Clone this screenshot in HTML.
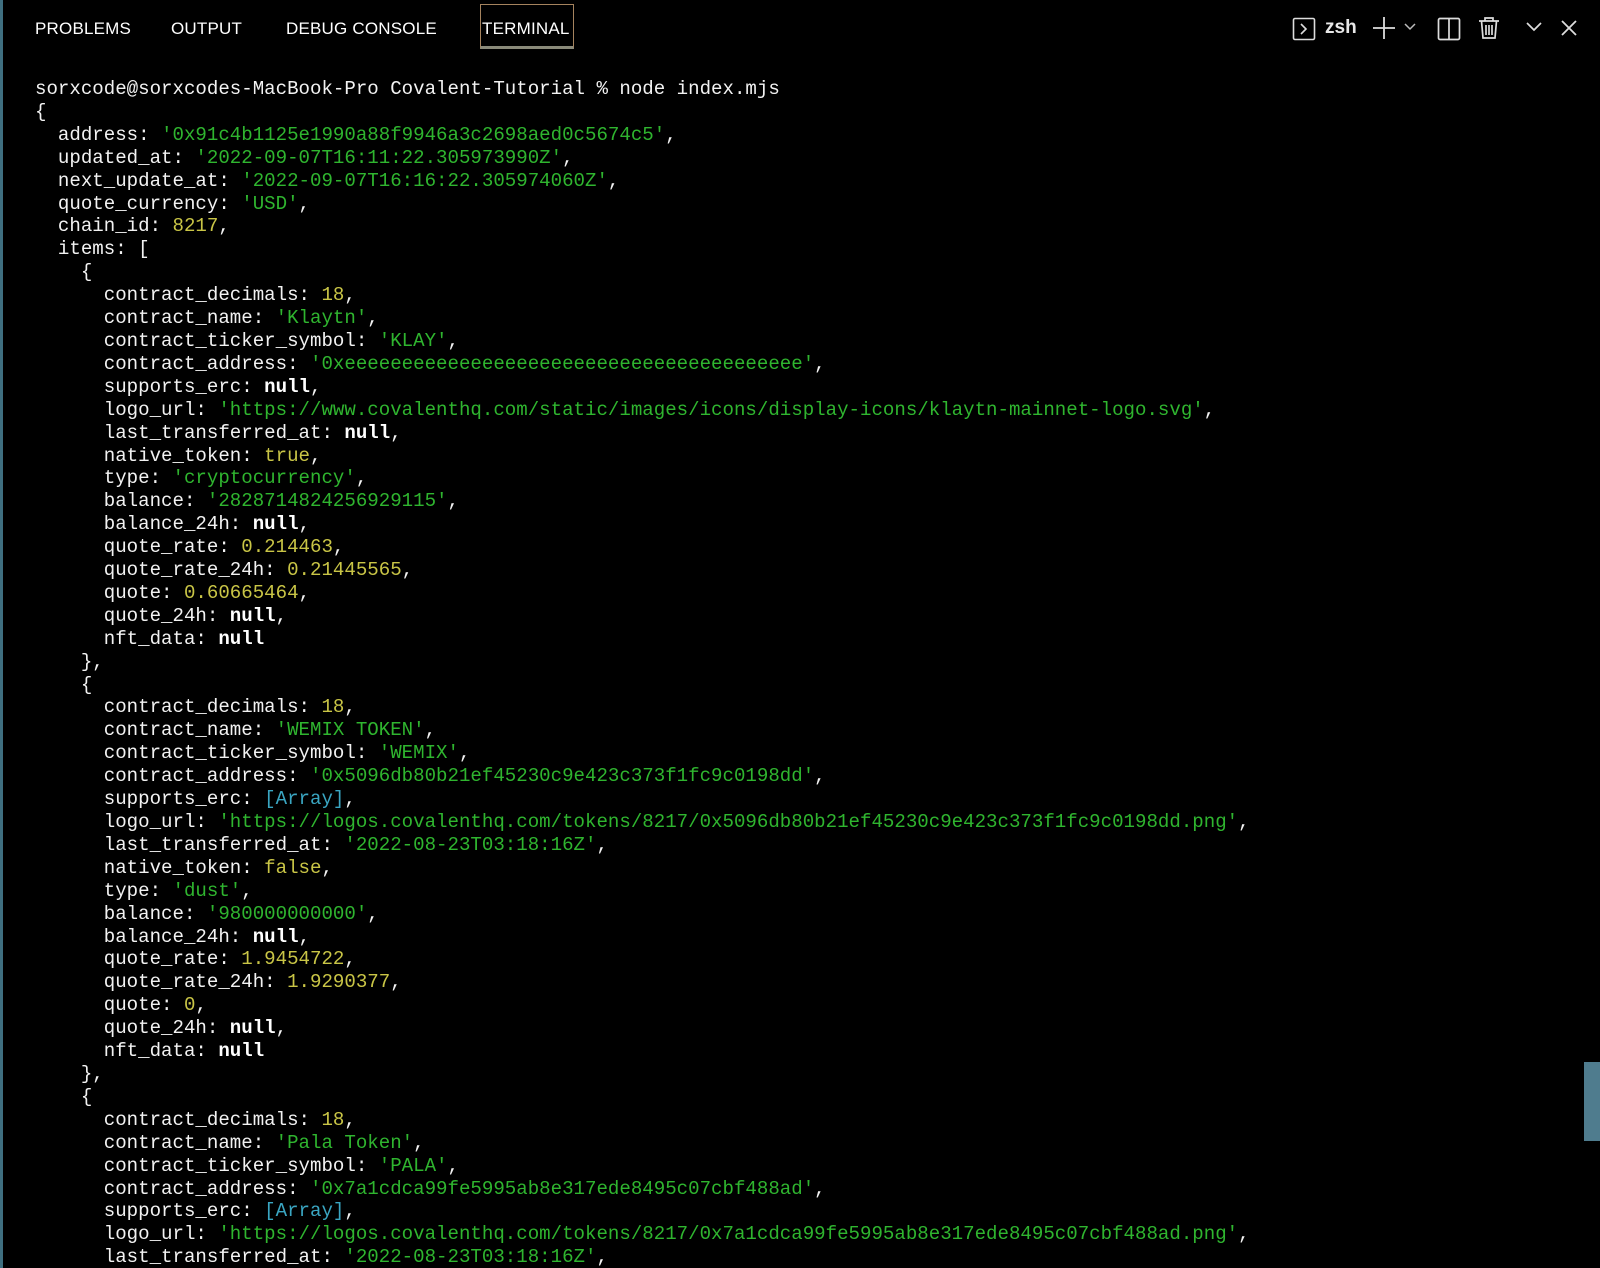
<!DOCTYPE html>
<html><head><meta charset="utf-8"><style>
html,body{margin:0;padding:0;background:#000;width:1600px;height:1268px;overflow:hidden}
body{position:relative;font-family:"Liberation Sans",sans-serif;color:#fff}
.lb{position:absolute;left:0;top:0;width:3px;height:1268px;background:#3f6f80}
.tab{position:absolute;top:19px;font-size:17px;color:#fff;letter-spacing:0.2px}
.tbox{position:absolute;left:480px;top:4px;width:94px;height:45px;border:1.5px solid #a5835e;border-bottom:3px solid #8a8a7a;box-sizing:border-box}
pre{position:absolute;left:35px;top:78px;margin:0;font-family:"Liberation Mono",monospace;font-size:19.1px;line-height:22.9px;color:#f2f2f2}
.g{color:#2fb52f}.y{color:#c9c546}.c{color:#3aa6c2}.b{font-weight:bold;color:#fff}
.sb{position:absolute;left:1584px;top:1062px;width:16px;height:79px;background:#4f7c8e}
svg{position:absolute}
</style></head><body>
<div class="lb"></div>
<div class="tab" style="left:35px">PROBLEMS</div>
<div class="tab" style="left:171px">OUTPUT</div>
<div class="tab" style="left:286px">DEBUG CONSOLE</div>
<div class="tbox"></div>
<div class="tab" style="left:482px">TERMINAL</div>
<svg style="left:1292px;top:17px" width="24" height="24" viewBox="0 0 24 24" fill="none" stroke="#ddd" stroke-width="1.6"><rect x="1.5" y="1.5" width="21" height="21" rx="1.5"/><path d="M9 7l5 5-5 5"/></svg>
<div style="position:absolute;left:1325px;top:17px;font-size:19px;font-weight:bold;color:#e8e8e8">zsh</div>
<svg style="left:1372px;top:16px" width="24" height="24" viewBox="0 0 24 24" stroke="#ddd" stroke-width="1.8"><path d="M12 1v22M1 12h22"/></svg>
<svg style="left:1403px;top:22px" width="14" height="10" viewBox="0 0 14 10" fill="none" stroke="#bbb" stroke-width="1.5"><path d="M2 2l5 5 5-5"/></svg>
<svg style="left:1437px;top:17px" width="24" height="24" viewBox="0 0 24 24" fill="none" stroke="#ddd" stroke-width="1.7"><rect x="1.5" y="1.5" width="21" height="21" rx="1.5"/><path d="M12 1.5v21"/></svg>
<svg style="left:1478px;top:16px" width="22" height="24" viewBox="0 0 22 24" fill="none" stroke="#ddd" stroke-width="1.7"><path d="M1 5h20M7 5V2h8v3M3.5 5l1.5 17h12l1.5-17M8 9v10M11 9v10M14 9v10"/></svg>
<svg style="left:1525px;top:20px" width="18" height="14" viewBox="0 0 18 14" fill="none" stroke="#ddd" stroke-width="1.7"><path d="M2 3l7 7 7-7"/></svg>
<svg style="left:1560px;top:19px" width="18" height="18" viewBox="0 0 18 18" stroke="#ddd" stroke-width="1.8"><path d="M2 2l14 14M16 2L2 16"/></svg>
<pre>sorxcode@sorxcodes-MacBook-Pro Covalent-Tutorial % node index.mjs
{
  address: <span class="g">'0x91c4b1125e1990a88f9946a3c2698aed0c5674c5'</span>,
  updated_at: <span class="g">'2022-09-07T16:11:22.305973990Z'</span>,
  next_update_at: <span class="g">'2022-09-07T16:16:22.305974060Z'</span>,
  quote_currency: <span class="g">'USD'</span>,
  chain_id: <span class="y">8217</span>,
  items: [
    {
      contract_decimals: <span class="y">18</span>,
      contract_name: <span class="g">'Klaytn'</span>,
      contract_ticker_symbol: <span class="g">'KLAY'</span>,
      contract_address: <span class="g">'0xeeeeeeeeeeeeeeeeeeeeeeeeeeeeeeeeeeeeeeee'</span>,
      supports_erc: <span class="b">null</span>,
      logo_url: <span class="g">'https://www.covalenthq.com/static/images/icons/display-icons/klaytn-mainnet-logo.svg'</span>,
      last_transferred_at: <span class="b">null</span>,
      native_token: <span class="y">true</span>,
      type: <span class="g">'cryptocurrency'</span>,
      balance: <span class="g">'2828714824256929115'</span>,
      balance_24h: <span class="b">null</span>,
      quote_rate: <span class="y">0.214463</span>,
      quote_rate_24h: <span class="y">0.21445565</span>,
      quote: <span class="y">0.60665464</span>,
      quote_24h: <span class="b">null</span>,
      nft_data: <span class="b">null</span>
    },
    {
      contract_decimals: <span class="y">18</span>,
      contract_name: <span class="g">'WEMIX TOKEN'</span>,
      contract_ticker_symbol: <span class="g">'WEMIX'</span>,
      contract_address: <span class="g">'0x5096db80b21ef45230c9e423c373f1fc9c0198dd'</span>,
      supports_erc: <span class="c">[Array]</span>,
      logo_url: <span class="g">'https://logos.covalenthq.com/tokens/8217/0x5096db80b21ef45230c9e423c373f1fc9c0198dd.png'</span>,
      last_transferred_at: <span class="g">'2022-08-23T03:18:16Z'</span>,
      native_token: <span class="y">false</span>,
      type: <span class="g">'dust'</span>,
      balance: <span class="g">'980000000000'</span>,
      balance_24h: <span class="b">null</span>,
      quote_rate: <span class="y">1.9454722</span>,
      quote_rate_24h: <span class="y">1.9290377</span>,
      quote: <span class="y">0</span>,
      quote_24h: <span class="b">null</span>,
      nft_data: <span class="b">null</span>
    },
    {
      contract_decimals: <span class="y">18</span>,
      contract_name: <span class="g">'Pala Token'</span>,
      contract_ticker_symbol: <span class="g">'PALA'</span>,
      contract_address: <span class="g">'0x7a1cdca99fe5995ab8e317ede8495c07cbf488ad'</span>,
      supports_erc: <span class="c">[Array]</span>,
      logo_url: <span class="g">'https://logos.covalenthq.com/tokens/8217/0x7a1cdca99fe5995ab8e317ede8495c07cbf488ad.png'</span>,
      last_transferred_at: <span class="g">'2022-08-23T03:18:16Z'</span>,
</pre>
<div class="sb"></div>
</body></html>
